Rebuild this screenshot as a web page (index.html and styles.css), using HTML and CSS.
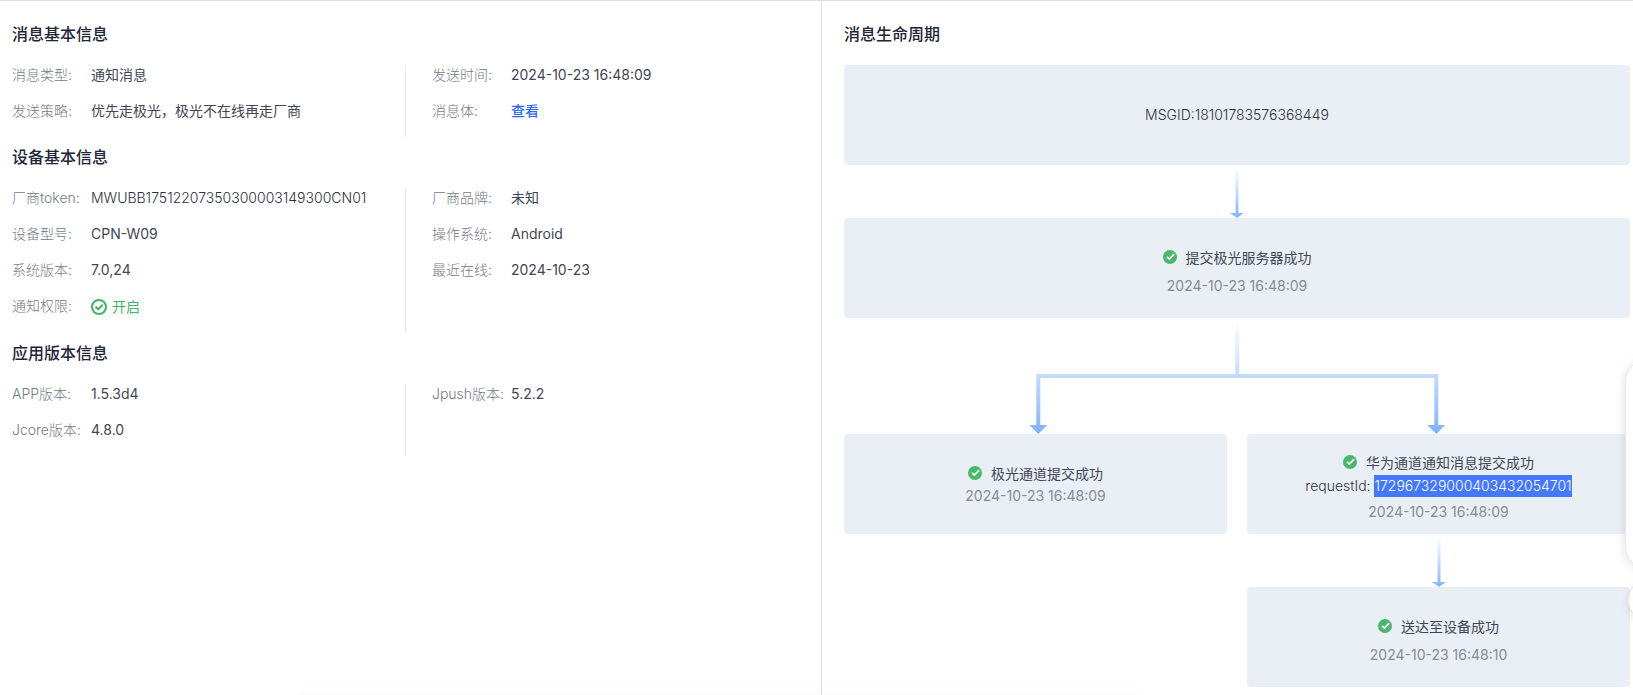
FILE: index.html
```html
<!DOCTYPE html>
<html lang="zh-CN">
<head>
<meta charset="utf-8">
<meta name="viewport" content="width=device-width, initial-scale=1">
<title>消息详情</title>
<link rel="stylesheet" href="styles.css">
</head>
<body>
<svg class="defs" width="0" height="0" aria-hidden="true">
  <defs>
    <linearGradient id="fade" gradientUnits="userSpaceOnUse" x1="0" y1="0" x2="0" y2="51">
      <stop offset="0" stop-color="#8cb7ff" stop-opacity="0"/>
      <stop offset="1" stop-color="#85b3ff"/>
    </linearGradient>
    <linearGradient id="forkfade" gradientUnits="userSpaceOnUse" x1="0" y1="0" x2="0" y2="114">
      <stop offset="0" stop-color="#8cb7ff" stop-opacity="0"/>
      <stop offset="1" stop-color="#80b0ff"/>
    </linearGradient>
    <symbol id="check" viewBox="0 0 14 14">
      <circle cx="7" cy="7" r="7" fill="#49b86b"/>
      <path d="M4 6.8 6.3 9.1 11.2 4.2" fill="none" stroke="#fff" stroke-width="1.7"/>
    </symbol>
    <symbol id="arrow" viewBox="0 0 14 51">
      <path d="M5.500 0h3v46H14L7 51 0 46h5.500z" fill="url(#fade)"/>
    </symbol>
  </defs>
</svg>
<main class="detail">
  <div class="info">
    <section class="group">
      <h2 class="title">消息基本信息</h2>
      <div class="columns">
        <dl class="fields">
          <div class="field"><dt>消息类型:</dt><dd>通知消息</dd></div>
          <div class="field"><dt>发送策略:</dt><dd>优先走极光，极光不在线再走厂商</dd></div>
        </dl>
        <dl class="fields">
          <div class="field"><dt>发送时间:</dt><dd>2024-10-23 16:48:09</dd></div>
          <div class="field"><dt>消息体:</dt><dd><a class="link" href="#">查看</a></dd></div>
        </dl>
      </div>
    </section>
    <section class="group">
      <h2 class="title">设备基本信息</h2>
      <div class="columns">
        <dl class="fields">
          <div class="field"><dt>厂商token:</dt><dd class="code">MWUBB17512207350300003149300CN01</dd></div>
          <div class="field"><dt>设备型号:</dt><dd>CPN-W09</dd></div>
          <div class="field"><dt>系统版本:</dt><dd>7.0,24</dd></div>
          <div class="field"><dt>通知权限:</dt><dd class="enabled"><svg class="ring" viewBox="0 0 16 16" aria-hidden="true"><circle cx="8" cy="8" r="7"/><path d="M4.500 7.700 7.200 10.300 11.800 5.800"/></svg>开启</dd></div>
        </dl>
        <dl class="fields">
          <div class="field"><dt>厂商品牌:</dt><dd>未知</dd></div>
          <div class="field"><dt>操作系统:</dt><dd>Android</dd></div>
          <div class="field"><dt>最近在线:</dt><dd>2024-10-23</dd></div>
        </dl>
      </div>
    </section>
    <section class="group">
      <h2 class="title">应用版本信息</h2>
      <div class="columns">
        <dl class="fields">
          <div class="field"><dt>APP版本:</dt><dd>1.5.3d4</dd></div>
          <div class="field"><dt>Jcore版本:</dt><dd>4.8.0</dd></div>
        </dl>
        <dl class="fields">
          <div class="field"><dt>Jpush版本:</dt><dd>5.2.2</dd></div>
        </dl>
      </div>
    </section>
  </div>
  <section class="lifecycle">
    <h2 class="title">消息生命周期</h2>
    <div class="node root"><p class="code">MSGID:18101783576368449</p></div>
    <svg class="arrow" aria-hidden="true"><use href="#arrow"/></svg>
    <div class="node spaced">
      <p class="state"><svg class="check" aria-hidden="true"><use href="#check"/></svg>提交极光服务器成功</p>
      <p class="time">2024-10-23 16:48:09</p>
    </div>
    <svg class="fork" viewBox="0 0 416 114" aria-hidden="true">
      <path d="M206 0h4v54h199v51h7l-9 9-9-9h7V58H11v47h7l-9 9-9-9h7V54h199z" fill="url(#forkfade)"/>
    </svg>
    <div class="branches">
      <div class="branch">
        <div class="node">
          <p class="state"><svg class="check" aria-hidden="true"><use href="#check"/></svg>极光通道提交成功</p>
          <p class="time">2024-10-23 16:48:09</p>
        </div>
      </div>
      <div class="branch">
        <div class="node dense">
          <p class="state"><svg class="check" aria-hidden="true"><use href="#check"/></svg>华为通道通知消息提交成功</p>
          <p class="request code">requestId: <mark>172967329000403432054701</mark></p>
          <p class="time">2024-10-23 16:48:09</p>
        </div>
        <svg class="arrow" aria-hidden="true"><use href="#arrow"/></svg>
        <div class="node spaced">
          <p class="state"><svg class="check" aria-hidden="true"><use href="#check"/></svg>送达至设备成功</p>
          <p class="time">2024-10-23 16:48:10</p>
        </div>
      </div>
    </div>
  </section>
</main>
<aside class="dock" aria-hidden="true"></aside>
<div class="dock-round" aria-hidden="true"></div>
<div class="bottom-sheet" aria-hidden="true"></div>
</body>
</html>
```

FILE: styles.css
```css
* {
  box-sizing: border-box;
}

body {
  margin: 0;
  background: #fff;
  color: #3f4654;
  font-family: Inter, "Noto Sans CJK SC", sans-serif;
  font-size: 14px;
  line-height: 20px;
}

h2,
p,
dl,
dd {
  margin: 0;
}

.defs {
  position: absolute;
}

.detail {
  display: grid;
  grid-template-columns: minmax(0, 822fr) minmax(0, 811fr);
  min-height: 100vh;
  border-top: 1px solid #dcdfe4;
}

.info {
  padding: 21px 21px 0 12px;
  border-right: 1px solid #dcdfe4;
}

.title {
  margin-bottom: 19px;
  color: #1d2536;
  font-size: 16px;
  font-weight: 500;
  line-height: 24px;
}

.group {
  margin-bottom: 8px;
}

.columns {
  display: grid;
  grid-template-columns: 1fr 1fr;
}

.fields:first-child {
  border-right: 1px solid #e6e8eb;
}

.fields:last-child {
  padding-left: 26px;
}

.field {
  display: flex;
  padding-bottom: 16px;
}

.field dt {
  flex: none;
  width: 79px;
  color: #737a86;
  font-weight: 300;
}

.code {
  color: #2b3240;
  font-weight: 300;
}

.link {
  color: #2f66ff;
  font-weight: 500;
  text-decoration: none;
}

.enabled {
  display: flex;
  align-items: center;
  gap: 5px;
  padding-top: 1px;
  color: #3fb465;
}

.ring {
  width: 16px;
  height: 16px;
  fill: none;
  stroke: #3fb465;
  stroke-width: 2;
}

.lifecycle {
  padding: 21px 3px 8px 22px;
}

.node {
  min-height: 100px;
  padding-top: 29px;
  border-radius: 4px;
  background: #eaeff6;
  line-height: 22px;
  text-align: center;
}

.root {
  padding-top: 39px;
}

.dense {
  padding-top: 18px;
}

.state {
  display: flex;
  align-items: center;
  justify-content: center;
  gap: 9px;
}

.check {
  width: 14px;
  height: 14px;
  margin-bottom: 2px;
}

.time {
  color: #868c97;
}

.spaced .time {
  margin-top: 6px;
}

.request {
  margin: 1px 0 4px;
}

mark {
  display: inline-block;
  background: #4478ff;
  color: #fff;
}

.arrow {
  display: block;
  width: 14px;
  height: 51px;
  margin: 2px auto 0;
}

.fork {
  display: block;
  width: 53%;
  height: 114px;
  margin: 2px auto 0;
}

.branches {
  display: grid;
  grid-template-columns: 1fr 1fr;
  gap: 20px;
}

.dock,
.dock-round,
.bottom-sheet {
  position: fixed;
  background: #fff;
}

.dock {
  top: 358px;
  right: -48px;
  width: 56px;
  height: 212px;
  border: 1px solid #e6e8eb;
  border-radius: 24px;
  box-shadow: 0 2px 12px rgba(0, 0, 0, 0.12);
}

.dock-round {
  top: 578px;
  right: -39px;
  width: 44px;
  height: 44px;
  border: 1px solid #e6e8eb;
  border-radius: 50%;
  box-shadow: 0 2px 8px rgba(0, 0, 0, 0.1);
}

.bottom-sheet {
  bottom: -40px;
  left: 18%;
  right: 30%;
  height: 40px;
  box-shadow: 0 0 16px rgba(0, 0, 0, 0.03);
}
```
